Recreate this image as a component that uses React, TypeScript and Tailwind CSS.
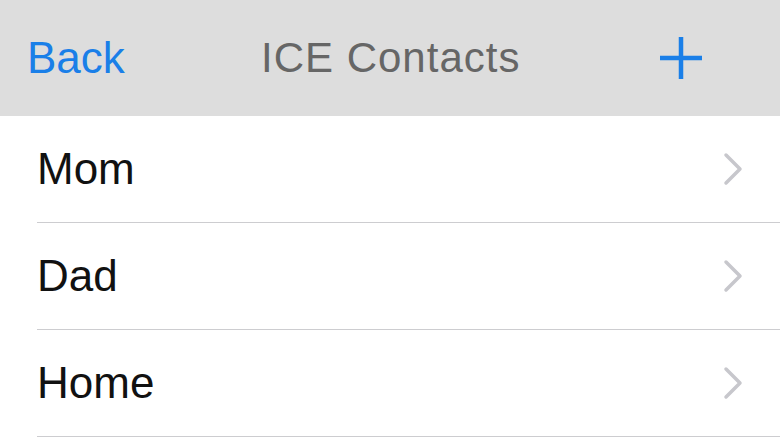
const contacts = ["Mom", "Dad", "Home"]

function Chevron() {
  return (
    <svg width="22" height="34" viewBox="0 0 22 34" fill="none">
      <path d="M4 3 L18 17 L4 31" stroke="#c7c7cc" strokeWidth="3.5" strokeLinecap="round" strokeLinejoin="round" />
    </svg>
  )
}

export default function App() {
  return (
    <div className="w-[780px] h-[438px] overflow-hidden bg-white font-['Liberation_Sans',Arial,sans-serif]">
      <div className="h-[116px] bg-[#dddddd] flex items-center pl-[27px] pr-[76px]">
        <span className="w-[99px] text-[44px] text-[#1a7fe8] leading-none">Back</span>
        <span className="ml-[135px] text-[42px] text-[#666666] leading-none tracking-[1px]">ICE Contacts</span>
        <svg className="ml-auto" width="46" height="46" viewBox="0 0 46 46">
          <path d="M23 2 V44 M2 23 H44" stroke="#1a7fe8" strokeWidth="4.5" />
        </svg>
      </div>
      <div className="flex flex-col">
        {contacts.map((name) => (
          <div key={name} className="pl-[37px]">
            <div className="h-[107px] flex items-center justify-between pr-[36px] border-b border-[#cdcdd0]">
              <span className="text-[44px] text-[#111111] leading-none">{name}</span>
              <Chevron />
            </div>
          </div>
        ))}
      </div>
    </div>
  )
}
